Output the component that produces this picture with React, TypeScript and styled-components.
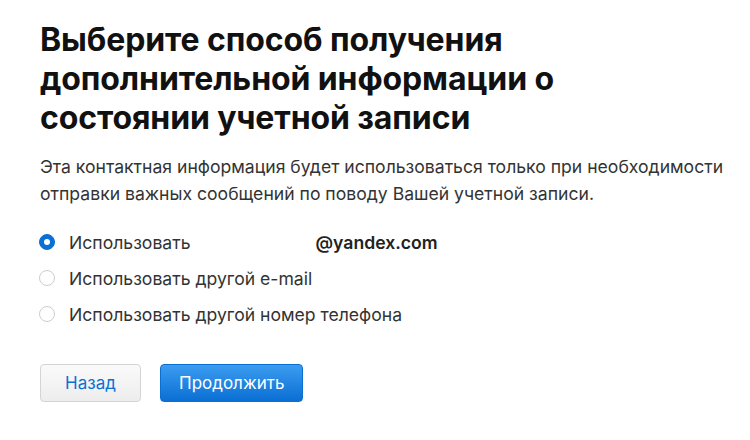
import React, { useState } from 'react';
import styled, { createGlobalStyle } from 'styled-components';

const GlobalStyle = createGlobalStyle`
  html, body {
    margin: 0;
    padding: 0;
    background: #fff;
  }
  body {
    font-family: Inter, "Noto Sans", "Liberation Sans", sans-serif;
    color: #333;
    -webkit-font-smoothing: antialiased;
  }
`

const Page = styled.main`
  width: 750px;
  height: 440px;
  box-sizing: border-box;
  padding: 20px 12px 0 40px;
  overflow: hidden;
`

const Title = styled.h1`
  margin: 0;
  font-size: 32px;
  line-height: 39px;
  font-weight: 700;
  letter-spacing: -0.1px;
  color: #111;
  max-width: 560px;
`

const Lead = styled.p`
  margin: 16px 0 0;
  font-size: 17.6px;
  line-height: 27px;
  color: #333;
`

const Options = styled.div`
  display: flex;
  flex-direction: column;
  margin-top: 17px;
`

const OptionRow = styled.label`
  display: flex;
  align-items: center;
  height: 36px;
  cursor: pointer;
  font-size: 17.6px;
  color: #333;
`

const Radio = styled.span<{ checked: boolean }>`
  box-sizing: border-box;
  width: 16px;
  height: 16px;
  border-radius: 50%;
  flex: 0 0 auto;
  margin-left: -1px;
  margin-right: 14px;
  display: flex;
  align-items: center;
  justify-content: center;
  background: ${({ checked }) => checked ? '#0a70d6' : '#fff'};
  border: 1px solid ${({ checked }) => checked ? '#0a70d6' : '#cdcdcd'};

  &::after {
    content: '';
    width: 6px;
    height: 6px;
    border-radius: 50%;
    background: #fff;
    display: ${({ checked }) => checked ? 'block' : 'none'};
  }
`

const Email = styled.span`
  margin-left: 125px;
  font-weight: 600;
  color: #222;
`

const Actions = styled.div`
  display: flex;
  gap: 19px;
  margin-top: 32px;
`

const Button = styled.button<{ primary?: boolean }>`
  height: 38px;
  box-sizing: border-box;
  padding: 0 18px;
  border-radius: 4px;
  font-family: inherit;
  font-size: 17px;
  cursor: pointer;
  border: 1px solid ${({ primary }) => primary ? '#0b6fd1' : '#d4d4d4'};
  color: ${({ primary }) => primary ? '#fff' : '#0a70d6'};
  background: ${({ primary }) => primary
    ? 'linear-gradient(#3c9cf0, #0a6fd4)'
    : 'linear-gradient(#fafafa, #ededed)'};
`

const options = [
  { id: 'current', label: 'Использовать', email: '@yandex.com' },
  { id: 'email', label: 'Использовать другой e-mail' },
  { id: 'phone', label: 'Использовать другой номер телефона' },
]

export default function App() {
  const [selected, setSelected] = useState('current')

  return (
    <Page>
      <GlobalStyle />
      <Title>Выберите способ получения дополнительной информации о состоянии учетной записи</Title>
      <Lead>
        Эта контактная информация будет использоваться только при необходимости отправки важных сообщений по поводу Вашей учетной записи.
      </Lead>
      <Options>
        {options.map(o => (
          <OptionRow key={o.id} onClick={() => setSelected(o.id)}>
            <Radio checked={selected === o.id} />
            {o.label}
            {o.email && <Email>{o.email}</Email>}
          </OptionRow>
        ))}
      </Options>
      <Actions>
        <Button style={{ width: 101 }}>Назад</Button>
        <Button primary>Продолжить</Button>
      </Actions>
    </Page>
  )
}
